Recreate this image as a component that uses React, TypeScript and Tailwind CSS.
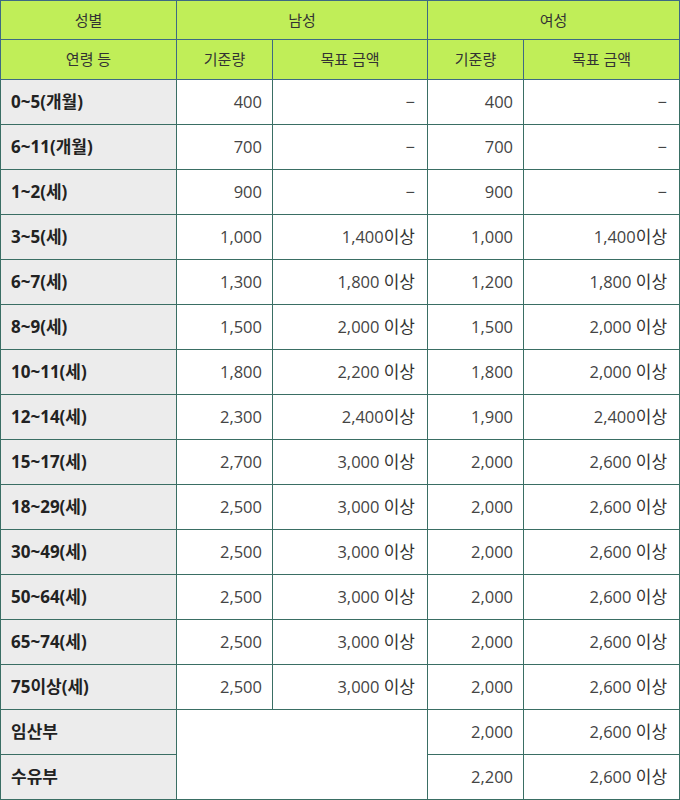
const rows = [
    { age: '0~5(개월)', mBase: '400', mGoal: '−', fBase: '400', fGoal: '−' },
    { age: '6~11(개월)', mBase: '700', mGoal: '−', fBase: '700', fGoal: '−' },
    { age: '1~2(세)', mBase: '900', mGoal: '−', fBase: '900', fGoal: '−' },
    { age: '3~5(세)', mBase: '1,000', mGoal: '1,400이상', fBase: '1,000', fGoal: '1,400이상' },
    { age: '6~7(세)', mBase: '1,300', mGoal: '1,800 이상', fBase: '1,200', fGoal: '1,800 이상' },
    { age: '8~9(세)', mBase: '1,500', mGoal: '2,000 이상', fBase: '1,500', fGoal: '2,000 이상' },
    { age: '10~11(세)', mBase: '1,800', mGoal: '2,200 이상', fBase: '1,800', fGoal: '2,000 이상' },
    { age: '12~14(세)', mBase: '2,300', mGoal: '2,400이상', fBase: '1,900', fGoal: '2,400이상' },
    { age: '15~17(세)', mBase: '2,700', mGoal: '3,000 이상', fBase: '2,000', fGoal: '2,600 이상' },
    { age: '18~29(세)', mBase: '2,500', mGoal: '3,000 이상', fBase: '2,000', fGoal: '2,600 이상' },
    { age: '30~49(세)', mBase: '2,500', mGoal: '3,000 이상', fBase: '2,000', fGoal: '2,600 이상' },
    { age: '50~64(세)', mBase: '2,500', mGoal: '3,000 이상', fBase: '2,000', fGoal: '2,600 이상' },
    { age: '65~74(세)', mBase: '2,500', mGoal: '3,000 이상', fBase: '2,000', fGoal: '2,600 이상' },
    { age: '75이상(세)', mBase: '2,500', mGoal: '3,000 이상', fBase: '2,000', fGoal: '2,600 이상' },
];

const extra = [
    { age: '임산부', fBase: '2,000', fGoal: '2,600 이상' },
    { age: '수유부', fBase: '2,200', fGoal: '2,600 이상' },
];

const th = 'border border-[#3d6a84] bg-[#c0ee58] text-center font-normal text-[15px] text-[#333]';
const label = 'h-[45px] border border-[#3a6e64] bg-[#ececec] pl-[10px] text-left font-bold text-[17px] text-[#222]';
const num = 'h-[45px] border border-[#3a6e64] bg-white pr-[10px] text-right text-[16.5px] text-[#444]';
const goal = 'h-[45px] border border-[#3a6e64] bg-white pr-[12px] text-right text-[16.5px] text-[#444]';

function Goal({ text }: { text: string }) {
    const i = text.indexOf('이상');
    if (i < 0) return <>{text}</>;
    return (
        <>
            {text.slice(0, i)}
            <span className="text-[17px] text-[#333]">이상</span>
        </>
    );
}

export default function App() {
    return (
        <div className="w-[680px] bg-white" style={{ fontFamily: '"Open Sans", "Noto Sans CJK KR", sans-serif' }}>
            <table className="w-[679px] table-fixed border-collapse">
                <colgroup>
                    <col className="w-[176px]" />
                    <col className="w-[96px]" />
                    <col className="w-[155px]" />
                    <col className="w-[96px]" />
                    <col className="w-[156px]" />
                </colgroup>
                <thead>
                    <tr className="h-[39px]">
                        <th className={th}>성별</th>
                        <th className={th} colSpan={2}>남성</th>
                        <th className={th} colSpan={2}>여성</th>
                    </tr>
                    <tr className="h-[40px]">
                        <th className={th}>연령 등</th>
                        <th className={th}>기준량</th>
                        <th className={th}>목표 금액</th>
                        <th className={th}>기준량</th>
                        <th className={th}>목표 금액</th>
                    </tr>
                </thead>
                <tbody>
                    {rows.map((r) => (
                        <tr key={r.age}>
                            <td className={label}>{r.age}</td>
                            <td className={num}>{r.mBase}</td>
                            <td className={goal}><Goal text={r.mGoal} /></td>
                            <td className={num}>{r.fBase}</td>
                            <td className={goal}><Goal text={r.fGoal} /></td>
                        </tr>
                    ))}
                    {extra.map((r, i) => (
                        <tr key={r.age}>
                            <td className={label}>{r.age}</td>
                            {i === 0 && <td className="border border-[#3a6e64] bg-white" colSpan={2} rowSpan={2}></td>}
                            <td className={num}>{r.fBase}</td>
                            <td className={goal}><Goal text={r.fGoal} /></td>
                        </tr>
                    ))}
                </tbody>
            </table>
        </div>
    );
}
